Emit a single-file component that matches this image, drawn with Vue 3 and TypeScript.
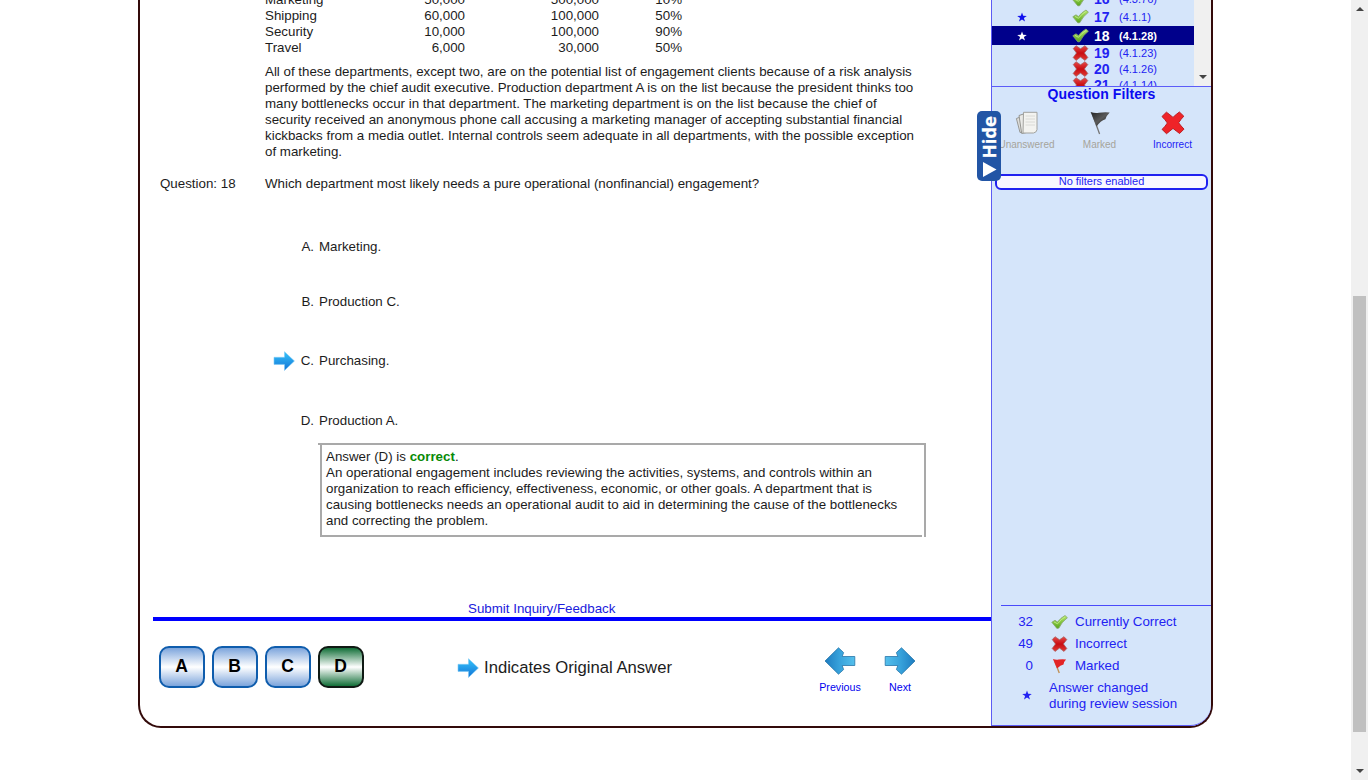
<script setup lang="ts">
interface Dept { name: string; a: string; b: string; pct: string }
interface NavRow { no: string; ref: string; ok: boolean; star: boolean; active?: boolean }

const departments: Dept[] = [
  { name: 'Marketing', a: '50,000', b: '500,000', pct: '10%' },
  { name: 'Shipping', a: '60,000', b: '100,000', pct: '50%' },
  { name: 'Security', a: '10,000', b: '100,000', pct: '90%' },
  { name: 'Travel', a: '6,000', b: '30,000', pct: '50%' },
]
const passage: string[] = [
  'All of these departments, except two, are on the potential list of engagement clients because of a risk analysis',
  'performed by the chief audit executive. Production department A is on the list because the president thinks too',
  'many bottlenecks occur in that department. The marketing department is on the list because the chief of',
  'security received an anonymous phone call accusing a marketing manager of accepting substantial financial',
  'kickbacks from a media outlet. Internal controls seem adequate in all departments, with the possible exception',
  'of marketing.',
]
const options = [
  { key: 'A', text: 'Marketing.', original: false },
  { key: 'B', text: 'Production C.', original: false },
  { key: 'C', text: 'Purchasing.', original: true },
  { key: 'D', text: 'Production A.', original: false },
]
const explanation: string[] = [
  'An operational engagement includes reviewing the activities, systems, and controls within an',
  'organization to reach efficiency, effectiveness, economic, or other goals. A department that is',
  'causing bottlenecks needs an operational audit to aid in determining the cause of the bottlenecks',
  'and correcting the problem.',
]
const navRows: NavRow[] = [
  { no: '16', ref: '(4.3.76)', ok: true, star: false },
  { no: '17', ref: '(4.1.1)', ok: true, star: true },
  { no: '18', ref: '(4.1.28)', ok: true, star: true, active: true },
  { no: '19', ref: '(4.1.23)', ok: false, star: false },
  { no: '20', ref: '(4.1.26)', ok: false, star: false },
  { no: '21', ref: '(4.1.14)', ok: false, star: false },
]
const totals = [
  { count: '32', icon: '#check', label: 'Currently Correct' },
  { count: '49', icon: '#cross', label: 'Incorrect' },
  { count: '0', icon: '#red-flag', label: 'Marked' },
]
</script>

<template>
  <div class="page">
    <svg class="defs" width="0" height="0" aria-hidden="true">
      <defs>
        <linearGradient id="g-green" x1="0" y1="0" x2="0" y2="1">
          <stop offset="0" stop-color="#b4e86a" /><stop offset="1" stop-color="#58a51c" />
        </linearGradient>
        <linearGradient id="g-red" x1="0" y1="0" x2="0" y2="1">
          <stop offset="0" stop-color="#e84a4a" /><stop offset="0.5" stop-color="#c80d12" /><stop offset="1" stop-color="#e03a35" />
        </linearGradient>
        <linearGradient id="g-sky" x1="0" y1="0" x2="0" y2="1">
          <stop offset="0" stop-color="#35c4fb" /><stop offset="1" stop-color="#1273d6" />
        </linearGradient>
        <linearGradient id="g-nav" x1="0" y1="0" x2="1" y2="0">
          <stop offset="0" stop-color="#55c0ec" /><stop offset="0.5" stop-color="#38a3dc" /><stop offset="1" stop-color="#1e7cc0" />
        </linearGradient>
        <linearGradient id="g-flag" x1="0" y1="0" x2="1" y2="1">
          <stop offset="0" stop-color="#222" /><stop offset="0.5" stop-color="#5a5a5a" /><stop offset="1" stop-color="#111" />
        </linearGradient>
        <symbol id="check" viewBox="0 0 17 15">
          <path d="M.8 7.8 4 5.8 6.4 7.6Q9.8 3.2 14 1L16.4 3.2Q10.5 7.7 7.9 13.6L5.9 13.9Z" fill="url(#g-green)" stroke="#86a66c" stroke-width="0.8" stroke-linejoin="round" />
          <path d="M3 7.4 6.5 9.3Q10 4.7 14.2 2.3" fill="none" stroke="#c8f090" stroke-width="0.8" />
        </symbol>
        <symbol id="cross" viewBox="0 0 16 16">
          <path d="M.8 3.6 3.5.7 8 3.8 12.5.7 15.3 3.6 11.9 7.9 15.3 12.5 12.5 15.4 8 12.1 3.5 15.4.7 12.5 4 8Z" fill="url(#g-red)" stroke="#a86060" stroke-width="0.8" stroke-linejoin="round" />
        </symbol>
        <symbol id="big-cross" viewBox="0 0 24 24">
          <path d="M1 5.5 5.4 1.2Q9 3.7 12 6.4 15 3.4 18.4 1L22.8 5.2Q19.8 8.2 17.6 11.8 20 15 23 18.1L18.6 22.5Q15.3 20 12 17.4 8.9 20 5.5 22.7L1.1 18.4Q4.3 15.3 6.4 12 4 8.5 1 5.5Z" fill="#ef2328" stroke="#bd1e22" stroke-width="1" />
        </symbol>
        <symbol id="red-flag" viewBox="0 0 14 16">
          <path d="M2.5 4 6.8 15" stroke="#c29258" stroke-width="1.4" />
          <path d="M.4 1Q3.5 2.2 6 1.6T13.6 1.4Q11 3.9 11 6.4 8 7 4.6 10.4Z" fill="#e32426" />
        </symbol>
        <symbol id="black-flag" viewBox="0 0 20 24">
          <path d="M3 5 9.6 23" stroke="#777" stroke-width="1.3" />
          <path d="M.6 1Q5 2.6 9 1.8 14 .8 19.7 1.4 16 5 15.4 8.2 10.5 9.4 6.6 15.6Z" fill="url(#g-flag)" />
        </symbol>
        <symbol id="papers" viewBox="0 0 24 24">
          <path d="M1.4 7.5 8 5 12 20 5 21.5Z" fill="#dededb" stroke="#8f8f8b" stroke-width=".9" />
          <path d="M4 4.5 10 2.5 14 21 6.7 22.5Z" fill="#eaeae7" stroke="#8c8c88" stroke-width=".9" />
          <path d="M8.5 1.3H22V18.7Q21.5 21.5 18.5 22H8Z" fill="#f3f3f0" stroke="#a2a29e" stroke-width="1" />
          <path d="M10.5 5H20M10.5 8H20M10.5 11H20M10.5 14H20" stroke="#dadad6" />
        </symbol>
        <symbol id="star" viewBox="0 0 10 10">
          <path d="M5 .4 6.2 3.8 9.8 3.9 6.9 6 8 9.5 5 7.4 2 9.5 3.1 6 .2 3.9 3.8 3.8Z" fill="currentColor" />
        </symbol>
        <symbol id="hint" viewBox="0 0 22 20">
          <path d="M1 6.3H11.5V.7L21.4 10 11.5 19.4V13.4H1Z" fill="url(#g-sky)" stroke="#7ccaf5" stroke-width="0.6" />
        </symbol>
        <symbol id="nav-arrow" viewBox="0 0 32 28">
          <path d="M1.2 9.5H13.8L12.4 5.6 17.5 .8 31 14 17.5 27.2 12.4 22.6 13.8 18.5H1.2Z" fill="url(#g-nav)" stroke="#2776aa" stroke-width="0.8" />
        </symbol>
      </defs>
    </svg>

    <div class="frame">
      <main class="main">
        <div class="dept-table">
          <div v-for="d in departments" :key="d.name" class="dept-row">
            <span>{{ d.name }}</span><span class="num">{{ d.a }}</span><span class="num">{{ d.b }}</span><span class="num">{{ d.pct }}</span>
          </div>
        </div>
        <div class="passage">
          <div v-for="line in passage" :key="line">{{ line }}</div>
        </div>
        <div class="question">
          <span class="q-label">Question: 18</span><span>Which department most likely needs a pure operational (nonfinancial) engagement?</span>
        </div>
        <div class="options">
          <div v-for="o in options" :key="o.key" class="option" :class="'opt-' + o.key">
            <span class="opt-icon"><svg v-if="o.original" width="22" height="20"><use href="#hint" /></svg></span>
            <span class="opt-key">{{ o.key }}.</span><span>{{ o.text }}</span>
          </div>
        </div>
        <div class="explain">
          <div>Answer (D) is <b>correct</b>.</div>
          <div v-for="line in explanation" :key="line">{{ line }}</div>
        </div>
        <div class="feedback">Submit Inquiry/Feedback</div>
        <footer class="toolbar">
          <div class="choices">
            <button v-for="o in options" :key="o.key" class="choice" :class="{ right: o.key === 'D' }">{{ o.key }}</button>
          </div>
          <div class="legend-note"><svg width="22" height="20"><use href="#hint" /></svg><span>Indicates Original Answer</span></div>
          <div class="pager">
            <div class="page-btn"><svg class="flip" width="32" height="28"><use href="#nav-arrow" /></svg><span>Previous</span></div>
            <div class="page-btn"><svg width="32" height="28"><use href="#nav-arrow" /></svg><span>Next</span></div>
          </div>
        </footer>
      </main>

      <aside class="side">
        <div class="nav">
          <div class="nav-list">
            <div v-for="r in navRows" :key="r.no" class="nav-row" :class="{ active: r.active, r17: r.no === '17' }">
              <span class="nav-star"><svg v-if="r.star" width="10" height="10"><use href="#star" /></svg></span>
              <svg v-if="r.ok" class="mark" width="17" height="15"><use href="#check" /></svg>
              <svg v-else class="mark" width="16" height="16"><use href="#cross" /></svg>
              <span class="nav-no">{{ r.no }}</span><span class="nav-ref">{{ r.ref }}</span>
            </div>
          </div>
          <div class="nav-scroll"><i class="tri down"></i></div>
        </div>
        <h2>Question Filters</h2>
        <div class="filters">
          <div class="filter"><svg width="24" height="24"><use href="#papers" /></svg><span>Unanswered</span></div>
          <div class="filter"><svg width="20" height="24"><use href="#black-flag" /></svg><span>Marked</span></div>
          <div class="filter on"><svg width="24" height="24"><use href="#big-cross" /></svg><span>Incorrect</span></div>
        </div>
        <div class="filter-state">No filters enabled</div>
        <div class="totals">
          <div v-for="t in totals" :key="t.label" class="total">
            <span class="count">{{ t.count }}</span>
            <span class="t-icon"><svg width="17" height="16"><use :href="t.icon" /></svg></span>
            <span>{{ t.label }}</span>
          </div>
          <div class="changed">
            <svg width="10" height="10"><use href="#star" /></svg>
            <span>Answer changed<br />during review session</span>
          </div>
        </div>
      </aside>
      <div class="hide-tab"><svg width="15" height="15" viewBox="0 0 15 15"><path d="M1 0 14.5 7.5 1 15Z" fill="#fff" /></svg><span>Hide</span></div>
    </div>

    <div class="scrollbar"><i class="tri up"></i><div class="thumb"></div><i class="tri down"></i></div>
  </div>
</template>

<style>
html, body { margin: 0; background: #fff; overflow: hidden; }
</style>

<style scoped>
.page {
  display: flex; justify-content: space-between; width: 1368px; height: 780px; overflow: hidden;
  font: 13.333px/16px "Liberation Sans", Arial, sans-serif; color: #1c1c1c; background: #fff;
  white-space: nowrap;
}
.page *, .page { box-sizing: border-box; }
.defs { position: absolute; }
svg { display: block; flex: none; }
.frame {
  position: relative; display: flex; width: 1075px; height: 728px; margin-left: 138px;
  border: 2px solid #330a0a; border-top: 0; border-radius: 0 0 23px 23px;
}
.main { width: 851px; height: 726px; overflow: hidden; }
.dept-table { margin: -8px 0 0 125px; }
.dept-row { display: grid; grid-template-columns: 100px 100px 134px 83px; height: 16px; }
.num { text-align: right; }
.passage { margin: 8px 0 0 125px; }
.question { display: flex; margin: 16px 0 0 20px; }
.q-label { width: 105px; }
.options { height: 251px; padding-top: 47px; }
.option { display: flex; align-items: center; height: 16px; padding-left: 133px; }
.opt-B { margin-top: 39px; }
.opt-C { margin-top: 43px; }
.opt-D { margin-top: 44px; }
.opt-icon { width: 28px; }
.opt-key { width: 13px; margin-right: 5px; display: flex; justify-content: flex-end; }
.explain {
  position: relative; width: 606px; height: 94px; margin-left: 180px; padding: 4px 0 0 4px;
  border: 2px solid #a9a9a9;
}
.explain::before { content: ""; position: absolute; left: -4px; top: -2px; width: 2px; height: 2px; background: #a9a9a9; }
.explain::after { content: ""; position: absolute; right: 0; bottom: -2px; width: 2px; height: 2px; background: #fff; }
.explain b { color: #078a07; }
.feedback {
  width: 838px; height: 21px; margin: 63px 0 0 13px; padding-left: 315px; line-height: 18px;
  color: #2020dc; border-bottom: 4px solid #00f;
}
.toolbar { display: flex; height: 105px; padding-left: 19px; }
.choices { display: flex; gap: 7px; padding-top: 25px; }
.choice {
  width: 46px; height: 42px; padding: 0 1px 1px 0; border: 2px solid #0f5dad; border-radius: 10px;
  background: linear-gradient(#7da5dc, #fff 50%, #7da5dc); font: bold 17.5px "Liberation Sans", Arial, sans-serif; color: #000;
}
.choice.right { border-color: #101a14; background: linear-gradient(#126f38, #fff 50%, #126f38); }
.legend-note { display: flex; align-items: center; gap: 5px; width: 216px; height: 20px; margin: 37px 0 0 93px; font-size: 16.67px; }
.pager { display: flex; margin: 26px 0 0 137px; font-size: 10.67px; color: #00e; }
.page-btn { display: flex; flex-direction: column; align-items: center; width: 60px; gap: 4px; }
.flip { transform: scaleX(-1); }
.side {
  display: flex; flex-direction: column; width: 220px; height: 726px; overflow: hidden; color: #2222f2;
  background: #d5e5fa; border: 1px solid #5c5cf4; border-width: 0 0 1px 1px; border-radius: 0 0 21px 0;
}
.nav { display: flex; flex: none; height: 87px; border-bottom: 1px solid #5c5cf8; overflow: hidden; }
.nav-list { width: 202px; }
.nav-row { display: flex; align-items: center; height: 16px; }
.nav-row:first-child { margin-top: -9px; }
.nav-row.r17 { height: 19px; }
.nav-row.active { height: 19px; color: #fff; background: #00008b; }
.nav-star { width: 80px; padding-left: 25px; color: #11e; }
.active .nav-star { color: #fff; }
.mark { width: 17px; }
.nav-no { width: 30px; padding-left: 5px; font-size: 14px; font-weight: bold; }
.nav-ref { font-size: 11px; }
.active .nav-ref { font-weight: bold; }
.nav-scroll { display: flex; align-items: flex-end; justify-content: center; width: 17px; padding-bottom: 7px; background: #f0f0f0; }
.tri { width: 0; height: 0; border: solid transparent; border-width: 0 4px; }
.tri.down { border-top: 4px solid #444; }
.tri.up { border-bottom: 4px solid #444; }
h2 { flex: none; margin: -1px 0 0; height: 16px; font-size: 14px; line-height: 17px; letter-spacing: 0.08px; text-align: center; color: #0a0af0; }
.filters { display: flex; flex: none; height: 72px; margin-left: -2px; padding-top: 9px; font-size: 10px; }
.filter { display: flex; flex-direction: column; align-items: center; width: 73px; gap: 2px; color: #a5a49a; }
.filter.on { color: #2222f5; }
.filter-state {
  flex: none; width: 213px; height: 16px; margin-left: 3px; border: 2px solid #2020f0; border-radius: 6px;
  background: #f8f6ff; font-size: 11px; line-height: 11px; text-align: center;
}
.totals { height: 120px; margin: auto 0 0 9px; padding-top: 5px; border-top: 1px solid #4a4afa; }
.total { display: flex; align-items: center; height: 22px; }
.count { width: 32px; text-align: right; }
.t-icon { width: 42px; padding-left: 18px; }
.changed { display: flex; align-items: center; gap: 17px; height: 32px; margin: 3px 0 0 21px; }
.changed svg { margin-top: -3px; }
.hide-tab {
  position: absolute; left: 837px; top: 111px; display: flex; flex-direction: column-reverse; align-items: center;
  justify-content: space-between; width: 24px; height: 70px; padding: 5px 0 4px; border-radius: 5px; background: #2255a5;
  color: #fff; font: 700 18.5px/20px "Open Sans", sans-serif;
}
.hide-tab span { writing-mode: vertical-rl; transform: rotate(180deg); -webkit-text-stroke: 0.3px #fff; }
.scrollbar { display: flex; flex-direction: column; align-items: center; width: 17px; height: 780px; padding-top: 7px; background: #f0f0f0; }
.thumb { width: 13px; height: 436px; margin: 285px 0 37px; background: #c0c0c0; }
</style>
